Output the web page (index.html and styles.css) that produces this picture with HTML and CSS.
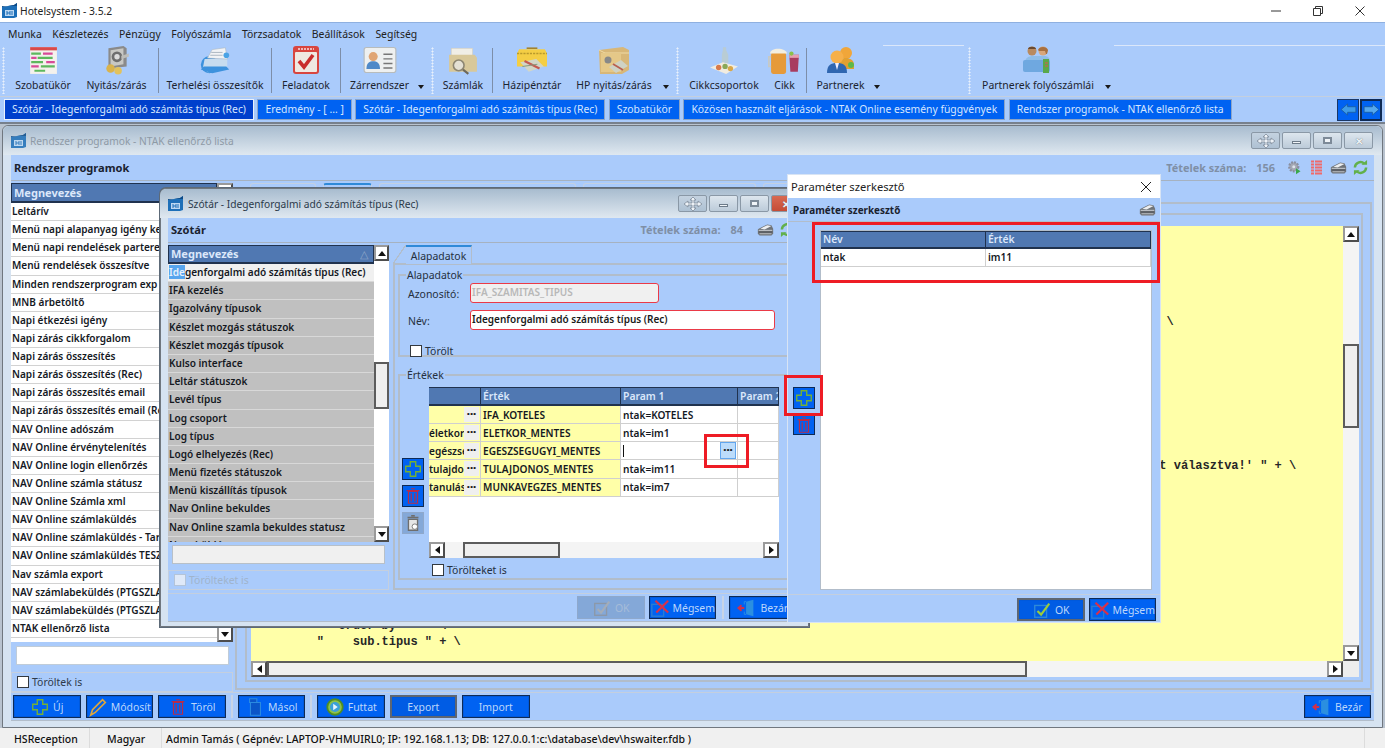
FILE: index.html
```html
<!DOCTYPE html>
<html lang="hu">
<head>
<meta charset="utf-8">
<title>Hotelsystem - 3.5.2</title>
<link rel="stylesheet" href="styles.css">
</head>
<body>
<svg class="sprite" xmlns="http://www.w3.org/2000/svg">
  <symbol id="logo" viewBox="0 0 16 16"><path d="M0 4l12-2 3-2v14l-3 1H0z" fill="#1d6fb8"/><path d="M0 4l12-2 3-2v3H0z" fill="#0c4a86"/><rect x="3" y="7" width="9" height="6" fill="#bcd8f2"/><path d="M5 8v4M8 8v4M5 10h3M10 8v4" stroke="#1d6fb8" stroke-width="1"/></symbol>
  <symbol id="plus" viewBox="0 0 22 22"><path d="M8 3h6v5h5v6h-5v5H8v-5H3V8h5z" fill="none" stroke="#74b036" stroke-width="1.500"/></symbol>
  <symbol id="trash" viewBox="0 0 22 22"><path d="M6 6h10v13H6zM4 5h14M9 3h4M9 8v9M13 8v9" fill="none" stroke="#b92c48" stroke-width="1.300"/></symbol>
  <symbol id="pencil" viewBox="0 0 22 22"><path d="M3 20l2-6L16 3l3 3L8 17z" fill="none" stroke="#e0a83a" stroke-width="1.800"/></symbol>
  <symbol id="copy" viewBox="0 0 22 22"><path d="M5 2h8v4h-8zM8 6h9v14H6V6z" fill="#0a55c8" stroke="#2a8ae0" stroke-width="1.200"/></symbol>
  <symbol id="play" viewBox="0 0 22 22"><circle cx="11" cy="11" r="8.500" fill="#8ec24a" stroke="#4f8d22" stroke-width="2"/><circle cx="11" cy="11" r="5.500" fill="#3aa0d8"/><path d="M9 7.500l5 3.500-5 3.500z" fill="#e6f4ff"/></symbol>
  <symbol id="check" viewBox="0 0 22 22"><rect x="3" y="6" width="13" height="13" fill="none" stroke="#2e8ad8" stroke-width="1.500"/><path d="M6 12l4 4 9-12" fill="none" stroke="#9ccc3a" stroke-width="2.400"/></symbol>
  <symbol id="checkgrey" viewBox="0 0 22 22"><rect x="3" y="6" width="13" height="13" fill="none" stroke="#8c98a8" stroke-width="1.500"/><path d="M6 12l4 4 9-12" fill="none" stroke="#a4adb9" stroke-width="2.400"/></symbol>
  <symbol id="cancel" viewBox="0 0 22 22"><rect x="2" y="7" width="13" height="13" fill="none" stroke="#2b7cd0" stroke-width="1.500"/><path d="M6 3l14 13M20 3L7 16" fill="none" stroke="#d8304a" stroke-width="2.400"/></symbol>
  <symbol id="door" viewBox="0 0 22 22"><path d="M10 4l8-2v18l-8-2z" fill="#2b8fe0"/><path d="M10 4h-2v3M10 18H8v-3" fill="none" stroke="#2b8fe0"/><path d="M1 11h7M5 8l-3.500 3 3.500 3" fill="none" stroke="#d0304a" stroke-width="2"/></symbol>
  <symbol id="printer" viewBox="0 0 20 14"><path d="M2 6l10-5 5 1 2 4v6l-2 2H3l-2-2V7z" fill="#6f7378"/><path d="M4 6l8-4 5 1-8 4z" fill="#eceef0"/><path d="M2 8h16" stroke="#d9dcdf"/><path d="M2 10h16" stroke="#4a4d52"/><path d="M3 12h14" stroke="#c6c9cc"/></symbol>
  <symbol id="gear" viewBox="0 0 20 20"><circle cx="9" cy="9" r="6" fill="#a4a8b4" stroke="#8a8fa0" stroke-width="3" stroke-dasharray="2.500 1.500"/><circle cx="9" cy="9" r="2" fill="#dfe4ec"/><path d="M12 11l6 4-6 4z" fill="#3aa84a"/></symbol>
  <symbol id="redlist" viewBox="0 0 17 15"><path d="M3 1.500h11M3 4.500h11M3 7.500h11M3 10.500h11M3 13.500h11" stroke="#ef6a6a" stroke-width="2" stroke-dasharray="3 1 8 0"/></symbol>
  <symbol id="refresh" viewBox="0 0 18 16"><path d="M3 8a6 6 0 0 1 10-4.200M15 8a6 6 0 0 1-10 4.200" fill="none" stroke="#62b04a" stroke-width="2.600"/><path d="M10 5h6V0zM8 11H2v5z" fill="#62b04a"/></symbol>
  <symbol id="move" viewBox="0 0 22 16"><path d="M11 1l3 3h-2v3h4V5l4 3-4 3V9h-4v3h2l-3 3-3-3h2V9H6v2L2 8l4-3v2h4V4H8z" fill="#edf2f7" stroke="#7f8c9a" stroke-width=".8"/></symbol>
  <symbol id="t-gantt" viewBox="0 0 28 28"><rect x="2" y="2" width="25" height="25" fill="#f4f1ec"/><rect x="2" y="2" width="25" height="3" fill="#d94a4a"/><path d="M3 8h9M9 12h14M3 16h11M12 20h13M6 24h10" stroke="#5db85d" stroke-width="2"/><path d="M14 8h9M3 12h5M17 16h8M3 20h7" stroke="#d84a98" stroke-width="2"/></symbol>
  <symbol id="t-safe" viewBox="0 0 28 28"><path d="M6 3l14-2 3 2v17l-17 2z" fill="#8a8a8a"/><path d="M8 5l12-2v15l-12 2z" fill="#c8c8c4"/><circle cx="14" cy="11" r="5" fill="#6e6e6e"/><circle cx="14" cy="11" r="2.500" fill="#dcdcdc"/><path d="M18 10l7-2v3l-7 2z" fill="#bdbdb9"/><circle cx="8" cy="22" r="4" fill="#d9b34c"/><circle cx="15" cy="24" r="3.500" fill="#e2c25c"/></symbol>
  <symbol id="t-printer" viewBox="0 0 36 30"><circle cx="12" cy="20" r="9" fill="#3d92dd"/><path d="M7 14h24v11l-20 3-6-4z" fill="#c7dcef"/><path d="M10 13l5-9 14-2 2 12z" fill="#f1f3f5" stroke="#a9b4bf" stroke-width=".6"/><path d="M14 7h12M13 10h13" stroke="#a9b4bf"/><path d="M3 25l12 4 18-4-3-3H6z" fill="#3d92dd"/><circle cx="30" cy="10" r="3" fill="#4aa3e5"/></symbol>
  <symbol id="t-cal" viewBox="0 0 28 30"><rect x="1" y="1" width="26" height="28" rx="3" fill="#d8463f"/><rect x="3" y="7" width="22" height="20" rx="1" fill="#efe9e2"/><path d="M7 16l5 6 9-12" fill="none" stroke="#c92d2d" stroke-width="3.600"/><path d="M6 4h16" stroke="#f7dede" stroke-width="1.500" stroke-dasharray="2 1"/></symbol>
  <symbol id="t-card" viewBox="0 0 30 26"><rect x="1" y="2" width="28" height="22" rx="2" fill="#eef0f0" stroke="#b8bcbc"/><circle cx="9" cy="10" r="4" fill="#e0a574"/><path d="M3 21c0-6 3-7 6-7s6 1 6 7z" fill="#4f89c8"/><path d="M18 8h8M18 12h8M18 16h8M18 20h8" stroke="#777" stroke-width="1.300"/></symbol>
  <symbol id="t-folder" viewBox="0 0 28 28"><rect x="3" y="3" width="20" height="10" fill="#f0eee6" stroke="#cfc9b8" stroke-width=".5"/><path d="M1 9h24l2 3v13H1z" fill="#d8c89a"/><circle cx="10" cy="19" r="5" fill="#e4e0d4" stroke="#8d8672" stroke-width="1.500"/><path d="M14 23l5 4" stroke="#6e685a" stroke-width="2"/></symbol>
  <symbol id="t-cash" viewBox="0 0 30 28"><path d="M3 4h24l2 4v12H1V8z" fill="#f4ce44"/><path d="M1 8h28" stroke="#b99a2c" stroke-width="1.400" stroke-dasharray="2 1"/><path d="M10 3h10" stroke="#a2822e" stroke-width="1.500"/><path d="M4 16l15-3 7 7-14 5z" fill="#d3d6c6"/><path d="M8 15l14 7" stroke="#c45a50" stroke-width="2"/><path d="M6 20l14-2" stroke="#8a9a80"/></symbol>
  <symbol id="t-box" viewBox="0 0 32 30"><path d="M1 5l24-3 6 3v20l-7 4H2z" fill="#d8b778"/><path d="M1 5l6 3h24" fill="none" stroke="#f0dba6"/><rect x="3" y="8" width="20" height="19" fill="#e5c888"/><circle cx="10" cy="15" r="3.500" fill="#888"/><path d="M11 22l12-7 7 6-12 7z" fill="#cfd2c4"/><path d="M15 19l10 6" stroke="#b85f50" stroke-width="1.800"/></symbol>
  <symbol id="t-food" viewBox="0 0 30 28"><path d="M14 2h3v3l2 4v8h-6V9l1-4z" fill="#b9ccd4"/><path d="M2 21l12-5 14 4-11 7z" fill="#f1ece0"/><circle cx="10" cy="21" r="2.500" fill="#d87a4a"/><circle cx="16" cy="20" r="2.500" fill="#8aa858"/><circle cx="21" cy="22" r="2.500" fill="#d9a84a"/></symbol>
  <symbol id="t-beer" viewBox="0 0 30 28"><rect x="2" y="7" width="14" height="20" rx="2" fill="#e69a3a"/><path d="M1 8c0-6 15-6 16 0z" fill="#f3eee0"/><path d="M2 11H0v9h2" fill="none" stroke="#c9c9c0" stroke-width="1.500"/><path d="M19 9h9l-1 16h-7z" fill="#a83c60"/><path d="M19 9h9v3h-9z" fill="#e6a0b0"/><circle cx="21" cy="8" r="2" fill="#8cc04a"/></symbol>
  <symbol id="t-people" viewBox="0 0 30 30"><circle cx="20" cy="8" r="6" fill="#f0a63a"/><path d="M12 20c0-5 4-7 8-7s8 2 8 7v4H12z" fill="#e2a030"/><circle cx="11" cy="12" r="6.500" fill="#f6b04a"/><path d="M1 28c0-8 4-10 10-10s10 2 10 10z" fill="#2f66b0"/><path d="M9 18h4l-2 7z" fill="#eef"/><circle cx="25" cy="20" r="3" fill="#5cb84a"/></symbol>
  <symbol id="t-acc" viewBox="0 0 32 30"><circle cx="10" cy="6" r="4.500" fill="#b98a5f"/><path d="M6 4c0-3 8-3 8 0z" fill="#6a4a30"/><circle cx="21" cy="6" r="4.500" fill="#d8a67a"/><path d="M16 5c1-4 9-4 10 0l-1 4h-1l-1-3h-6z" fill="#a87040"/><path d="M3 17c0-4 4-6 8-6l11 0c4 0 6 2 6 6z" fill="#8fbde8"/><rect x="1" y="15" width="27" height="12" rx="2" fill="#6fa8e0"/><rect x="21" y="14" width="6" height="14" fill="#5aa84a"/><path d="M23 18h3M23 21h3" stroke="#e25050"/></symbol>
</svg>

<div class="app">
  <header class="titlebar">
    <svg class="logo"><use href="#logo"/></svg>
    <span class="title-text">Hotelsystem - 3.5.2</span>
    <div class="winctl">
      <svg class="ctl" viewBox="0 0 12 12"><path d="M1 6h10" stroke="#333"/></svg>
      <svg class="ctl" viewBox="0 0 12 12"><path d="M1.500 3.500h7v7h-7zM3.500 3.500v-2h7v7h-2" fill="none" stroke="#333"/></svg>
      <svg class="ctl" viewBox="0 0 12 12"><path d="M1.500 1.500l9 9M10.500 1.500l-9 9" stroke="#333"/></svg>
    </div>
  </header>

  <nav class="menu">
    <span>Munka</span><span>Készletezés</span><span>Pénzügy</span><span>Folyószámla</span><span>Törzsadatok</span><span>Beállítások</span><span>Segítség</span>
  </nav>

  <div class="toolbar">
    <i class="grip g0"></i>
    <div class="tool w1"><svg class="ti"><use href="#t-gantt"/></svg><span>Szobatükör</span></div>
    <div class="tool w2"><svg class="ti"><use href="#t-safe"/></svg><span>Nyitás/zárás</span></div>
    <i class="sep"></i>
    <div class="tool w3"><svg class="ti"><use href="#t-printer"/></svg><span>Terhelési összesítők</span></div>
    <i class="sep"></i>
    <div class="tool w4"><svg class="ti"><use href="#t-cal"/></svg><span>Feladatok</span></div>
    <i class="sep"></i>
    <div class="tool w5"><svg class="ti"><use href="#t-card"/></svg><span>Zárrendszer</span></div>
    <i class="drop"></i>
    <i class="grip"></i>
    <div class="tool w6"><svg class="ti"><use href="#t-folder"/></svg><span>Számlák</span></div>
    <i class="sep"></i>
    <div class="tool w7"><svg class="ti"><use href="#t-cash"/></svg><span>Házipénztár</span></div>
    <div class="tool w8"><svg class="ti"><use href="#t-box"/></svg><span>HP nyitás/zárás</span></div>
    <i class="drop"></i>
    <i class="grip"></i>
    <div class="tool w9"><svg class="ti"><use href="#t-food"/></svg><span>Cikkcsoportok</span></div>
    <div class="tool w10"><svg class="ti"><use href="#t-beer"/></svg><span>Cikk</span></div>
    <i class="sep"></i>
    <div class="tool w11"><svg class="ti"><use href="#t-people"/></svg><span>Partnerek</span></div>
    <i class="drop"></i>
    <i class="band band-a"></i>
    <i class="grip"></i>
    <div class="tool w12"><svg class="ti"><use href="#t-acc"/></svg><span>Partnerek folyószámlái</span></div>
    <i class="drop"></i>
    <i class="band band-b"></i>
  </div>

  <div class="tabbar">
    <span class="wtab active">Szótár - Idegenforgalmi adó számítás típus (Rec)</span>
    <span class="wtab">Eredmény - [ ... ]</span>
    <span class="wtab">Szótár - Idegenforgalmi adó számítás típus (Rec)</span>
    <span class="wtab">Szobatükör</span>
    <span class="wtab">Közösen használt eljárások - NTAK Online esemény függvények</span>
    <span class="wtab">Rendszer programok - NTAK ellenőrző lista</span>
    <div class="navs">
      <button class="nav"><svg viewBox="0 0 18 14"><path d="M1 7l7-6v3h9v6H8v3z" fill="#3d9be8" stroke="#1a5fa8"/></svg></button>
      <button class="nav nav-on"><svg viewBox="0 0 18 14"><path d="M17 7l-7-6v3H1v6h9v3z" fill="#55a8ee" stroke="#1a5fa8"/></svg></button>
    </div>
  </div>

  <main class="desktop">
    <section class="win win-main">
      <div class="win-title">
        <svg class="logo dim"><use href="#logo"/></svg>
        <span class="wt-text faded">Rendszer programok - NTAK ellenőrző lista</span>
        <div class="wbtns">
          <span class="wbtn wbtn-move"><svg><use href="#move"/></svg></span>
          <span class="wbtn"><i class="g-min"></i></span>
          <span class="wbtn"><i class="g-max"></i></span>
          <span class="wbtn"><i class="g-x">✕</i></span>
        </div>
      </div>
      <div class="head">
        <strong class="head-name">Rendszer programok</strong>
        <div class="head-right">
          <span class="count">Tételek száma:</span><span class="count num">156</span>
          <svg class="hi"><use href="#gear"/></svg>
          <svg class="hi"><use href="#redlist"/></svg>
          <svg class="hi"><use href="#printer"/></svg>
          <svg class="hi"><use href="#refresh"/></svg>
        </div>
      </div>
      <div class="main-body">
        <div class="main-left">
          <div class="listwrap main-list">
            <div class="list">
              <div class="lhead">Megnevezés</div>
              <div class="lrow">Leltárív</div>
              <div class="lrow">Menü napi alapanyag igény ke</div>
              <div class="lrow">Menü napi rendelések partere</div>
              <div class="lrow">Menü rendelések összesítve</div>
              <div class="lrow">Minden rendszerprogram exp</div>
              <div class="lrow">MNB árbetöltő</div>
              <div class="lrow">Napi étkezési igény</div>
              <div class="lrow">Napi zárás cikkforgalom</div>
              <div class="lrow">Napi zárás összesítés</div>
              <div class="lrow">Napi zárás összesítés (Rec)</div>
              <div class="lrow">Napi zárás összesítés email</div>
              <div class="lrow">Napi zárás összesítés email (Re</div>
              <div class="lrow">NAV Online adószám</div>
              <div class="lrow">NAV Online érvénytelenítés</div>
              <div class="lrow">NAV Online login ellenőrzés</div>
              <div class="lrow">NAV Online számla státusz</div>
              <div class="lrow">NAV Online Számla xml</div>
              <div class="lrow">NAV Online számlaküldés</div>
              <div class="lrow">NAV Online számlaküldés - Tar</div>
              <div class="lrow">NAV Online számlaküldés TESZ</div>
              <div class="lrow">Nav számla export</div>
              <div class="lrow">NAV számlabeküldés (PTGSZLA</div>
              <div class="lrow">NAV számlabeküldés (PTGSZLA</div>
              <div class="lrow">NTAK ellenőrző lista</div>
            </div>
            <div class="vscroll">
              <span class="sb-btn"><i class="tri up"></i></span>
              <span class="sb-fill"></span>
              <span class="sb-btn"><i class="tri down"></i></span>
            </div>
          </div>
          <div class="filter"><span class="input"></span></div>
          <label class="chk-row"><i class="cb"></i><span>Töröltek is</span></label>
        </div>
        <div class="main-right">
          <div class="ghost-tabs">
            <i class="gt gt1"></i><i class="gt gt2"></i><i class="gt gt3"></i><i class="gt gt4"></i><i class="gt gt5"></i>
          </div>
          <div class="panel-outer">
            <div class="panel-inner">
              <div class="editor">
                <div class="code-row">
                  <div class="code">
                    <div class="ln l1">\</div>
                    <div class="ln l2">t választva!' " + \</div>
                    <div class="ln l3">"  order by  " + \</div>
                    <div class="ln l4">"    sub.tipus " + \</div>
                  </div>
                  <div class="vscroll editor-v">
                    <span class="sb-btn"><i class="tri up"></i></span>
                    <span class="sb-gap gap-a"></span>
                    <span class="sb-thumb thumb-v"></span>
                    <span class="sb-fill"></span>
                    <span class="sb-btn"><i class="tri down"></i></span>
                  </div>
                </div>
                <div class="hscroll editor-h">
                  <span class="sb-btn"><i class="tri left"></i></span>
                  <span class="sb-thumb thumb-h"></span>
                  <span class="sb-fill"></span>
                  <span class="sb-btn"><i class="tri right"></i></span>
                  <span class="corner"></span>
                </div>
              </div>
            </div>
          </div>
        </div>
      </div>
      <div class="actions">
        <button class="btn"><svg><use href="#plus"/></svg>Új</button>
        <button class="btn"><svg><use href="#pencil"/></svg>Módosít</button>
        <button class="btn"><svg><use href="#trash"/></svg>Töröl</button>
        <i class="bsep"></i>
        <button class="btn"><svg><use href="#copy"/></svg>Másol</button>
        <i class="bsep"></i>
        <button class="btn"><svg><use href="#play"/></svg>Futtat</button>
        <button class="btn btn-grey">Export</button>
        <button class="btn">Import</button>
        <button class="btn btn-end"><svg><use href="#door"/></svg>Bezár</button>
      </div>
    </section>

    <section class="win win-dict">
      <div class="win-title">
        <svg class="logo"><use href="#logo"/></svg>
        <span class="wt-text">Szótár - Idegenforgalmi adó számítás típus (Rec)</span>
        <div class="wbtns">
          <span class="wbtn wbtn-move"><svg><use href="#move"/></svg></span>
          <span class="wbtn"><i class="g-min"></i></span>
          <span class="wbtn"><i class="g-max"></i></span>
          <span class="wbtn wbtn-close"><i class="g-x">✕</i></span>
        </div>
      </div>
      <div class="head head-dict">
        <strong class="head-name">Szótár</strong>
        <div class="head-right">
          <span class="count">Tételek száma:</span><span class="count num">84</span>
          <svg class="hi"><use href="#printer"/></svg>
          <svg class="hi"><use href="#refresh"/></svg>
        </div>
      </div>
      <div class="dict-body">
        <div class="dict-left">
          <div class="listwrap dict-list">
            <div class="list grey">
              <div class="lhead">Megnevezés<em class="sort">△</em></div>
              <div class="lrow cur"><span class="hl">Ide</span>genforgalmi adó számítás típus (Rec)</div>
              <div class="lrow">IFA kezelés</div>
              <div class="lrow">Igazolvány típusok</div>
              <div class="lrow">Készlet mozgás státuszok</div>
              <div class="lrow">Készlet mozgás típusok</div>
              <div class="lrow">Kulso interface</div>
              <div class="lrow">Leltár státuszok</div>
              <div class="lrow">Levél típus</div>
              <div class="lrow">Log csoport</div>
              <div class="lrow">Log típus</div>
              <div class="lrow">Logó elhelyezés (Rec)</div>
              <div class="lrow">Menü fizetés státuszok</div>
              <div class="lrow">Menü kiszállítás típusok</div>
              <div class="lrow">Nav Online bekuldes</div>
              <div class="lrow">Nav Online szamla bekuldes statusz</div>
              <div class="lrow">Nem küldés</div>
            </div>
            <div class="vscroll">
              <span class="sb-btn"><i class="tri up"></i></span>
              <span class="sb-gap gap-b"></span>
              <span class="sb-thumb thumb-dict"></span>
              <span class="sb-fill"></span>
              <span class="sb-btn"><i class="tri down"></i></span>
            </div>
          </div>
          <div class="filter filter-dict"><span class="input off"></span></div>
          <label class="chk-row chk-off"><i class="cb"></i><span>Törölteket is</span></label>
        </div>
        <div class="dict-right">
          <div class="tabstrip"><span class="tab-on">Alapadatok</span></div>
          <div class="tabpanel">
            <fieldset class="group g-base">
              <legend>Alapadatok</legend>
              <div class="field"><label>Azonosító:</label><span class="req ro">IFA_SZAMITAS_TIPUS</span></div>
              <div class="field"><label>Név:</label><span class="req wide">Idegenforgalmi adó számítás típus (Rec)</span></div>
              <label class="chk-plain chk-del"><i class="cb"></i><span>Törölt</span></label>
            </fieldset>
            <fieldset class="group g-vals">
              <legend>Értékek</legend>
              <div class="vals-row">
                <div class="side">
                  <button class="sq"><svg><use href="#plus"/></svg></button>
                  <button class="sq"><svg><use href="#trash"/></svg></button>
                  <button class="sq sq-off"><svg viewBox="0 0 22 22"><path d="M6 7h10v12H6zM5 5h12M9 3h4" fill="#e6e6e6" stroke="#6e6e6e" stroke-width="1.500"/><circle cx="13" cy="15" r="3" fill="#fff" stroke="#777"/></svg></button>
                </div>
                <div class="gridbox">
                  <div class="grid-view">
                    <div class="grow ghead"><span class="c1"></span><span class="c2">Érték</span><span class="c3">Param 1</span><span class="c4">Param 2</span></div>
                    <div class="grow"><span class="c1 y"><b class="dots">···</b></span><span class="c2 y">IFA_KOTELES</span><span class="c3">ntak=KOTELES</span><span class="c4"></span></div>
                    <div class="grow"><span class="c1 y">életkor<b class="dots">···</b></span><span class="c2 y">ELETKOR_MENTES</span><span class="c3">ntak=im1</span><span class="c4"></span></div>
                    <div class="grow"><span class="c1 y">egészsé<b class="dots">···</b></span><span class="c2 y">EGESZSEGUGYI_MENTES</span><span class="c3 edit"><i class="caret"></i><b class="dots dots-on">···</b></span><span class="c4"></span></div>
                    <div class="grow"><span class="c1 y">tulajdo<b class="dots">···</b></span><span class="c2 y">TULAJDONOS_MENTES</span><span class="c3">ntak=im11</span><span class="c4"></span></div>
                    <div class="grow"><span class="c1 y">tanulás<b class="dots">···</b></span><span class="c2 y">MUNKAVEGZES_MENTES</span><span class="c3">ntak=im7</span><span class="c4"></span></div>
                  </div>
                  <div class="hscroll">
                    <span class="sb-btn"><i class="tri left"></i></span>
                    <span class="sb-gap gap-c"></span>
                    <span class="sb-thumb thumb-grid"></span>
                    <span class="sb-fill"></span>
                    <span class="sb-btn"><i class="tri right"></i></span>
                  </div>
                </div>
              </div>
              <label class="chk-plain chk-vals"><i class="cb"></i><span>Törölteket is</span></label>
            </fieldset>
          </div>
        </div>
      </div>
      <div class="actions dict-actions">
        <button class="btn btn-off"><svg><use href="#checkgrey"/></svg>OK</button>
        <button class="btn"><svg><use href="#cancel"/></svg>Mégsem</button>
        <i class="bsep"></i>
        <button class="btn"><svg><use href="#door"/></svg>Bezár</button>
      </div>
    </section>

    <section class="param">
      <div class="param-title"><span>Paraméter szerkesztő</span><svg class="ctl" viewBox="0 0 12 12"><path d="M1 1l10 10M11 1L1 11" stroke="#222"/></svg></div>
      <div class="param-head"><strong>Paraméter szerkesztő</strong><svg class="hi"><use href="#printer"/></svg></div>
      <div class="param-body">
        <div class="param-side">
          <button class="sq"><svg><use href="#plus"/></svg></button>
          <button class="sq sq-low"><svg><use href="#trash"/></svg></button>
        </div>
        <div class="param-grid">
          <div class="prow phead"><span class="p1">Név</span><span class="p2">Érték</span></div>
          <div class="prow"><span class="p1">ntak</span><span class="p2">im11</span></div>
        </div>
      </div>
      <div class="param-actions">
        <button class="btn btn-grey"><svg><use href="#check"/></svg>OK</button>
        <button class="btn"><svg><use href="#cancel"/></svg>Mégsem</button>
      </div>
    </section>

    <i class="mark mark-grid"></i>
    <i class="mark mark-add"></i>
    <i class="mark mark-dots"></i>
  </main>

  <footer class="status">
    <span class="st st1">HSReception</span>
    <span class="st st2">Magyar</span>
    <span class="st st3">Admin Tamás ( Gépnév: LAPTOP-VHMUIRL0; IP: 192.168.1.13; DB: 127.0.0.1:c:\database\dev\hswaiter.fdb )</span>
    <span class="st st4"></span>
  </footer>
</div>
</body>
</html>
```

FILE: styles.css
```css
* { box-sizing: border-box; }
html, body { margin: 0; padding: 0; height: 100%; overflow: hidden; }
body { font-family: "Noto Sans", "Liberation Sans", sans-serif; font-size: 10.450px; color: #1a1a1a; background: #fff; }
i, em { font-style: normal; }
button { font: inherit; padding: 0; margin: 0; cursor: default; }
fieldset { margin: 0; }
.sprite { position: absolute; width: 0; height: 0; }

.app { width: 1385px; height: 748px; display: flex; flex-direction: column; overflow: hidden; }

/* title bar */
.titlebar { height: 22px; flex: none; display: flex; align-items: center; padding-left: 2px; background: #fff; }
.logo { width: 16px; height: 16px; flex: none; }
.logo.dim { opacity: .85; }
.title-text { margin-left: 2px; font-size: 10.300px; color: #222; }
.winctl { margin-left: auto; display: flex; gap: 30px; padding-right: 19px; }
.ctl { width: 12px; height: 12px; display: block; }

/* menu */
.menu { height: 23px; flex: none; background: #aacbfb; border-top: 1px solid #8fb0e0; display: flex; align-items: center; padding: 0 0 0 8px; gap: 10.500px; color: #222; }

/* toolbar */
.toolbar { height: 52px; flex: none; background: #aacbfb; display: flex; align-items: stretch; border-bottom: 1px solid #c4cfde; }
.tool { display: flex; flex-direction: column; align-items: center; justify-content: flex-end; padding-bottom: 4px; flex: none; white-space: nowrap; color: #1c2430; }
.ti { width: 34px; height: 31px; margin-bottom: 3px; }
.w1 { width: 70px; } .w2 { width: 77px; } .w3 { width: 106px; } .w4 { width: 62px; } .w5 { width: 71px; }
.w6 { width: 52px; } .w7 { width: 72px; } .w8 { width: 92px; } .w9 { width: 84px; } .w10 { width: 37px; } .w11 { width: 61px; } .w12 { width: 128px; }
.sep { width: 7px; flex: none; margin: 3px 0 3px; background: linear-gradient(#7d8ea8, #7d8ea8) center / 1px 100% no-repeat; }
.grip { width: 10px; flex: none; margin: 2px 0; background: radial-gradient(circle, #e8f0fc 45%, transparent 50%) center top / 3px 3px repeat-y; }
.g0 { margin-left: -1px; width: 9px; }
.drop { width: 12px; flex: none; position: relative; }
.drop::after { content: ""; position: absolute; left: 3px; bottom: 7px; border: 3px solid transparent; border-top: 4px solid #1a1a1a; border-bottom: 0; }
.band { flex: none; height: 1px; background: #dbe7fa; }
.band-a { width: 81px; }
.band-b { flex: 1; }

/* window tabs */
.tabbar { height: 25px; flex: none; background: #aacbfb; display: flex; align-items: center; gap: 3.500px; padding-left: 4px; }
.wtab { height: 21px; line-height: 19px; padding: 0 7px; background: #0062f2; color: #d6e6ff; border: 1px solid #8ba4c8; white-space: nowrap; flex: none; font-size: 10.350px; }
.wtab.active { background: #0040cc; border-color: #eaf1fb; }
.navs { margin-left: auto; display: flex; gap: 1px; padding-right: 3px; }
.nav { width: 22px; height: 22px; background: #0062f2; border: 1px solid #1a3766; display: flex; align-items: center; justify-content: center; }
.nav-on { border: 2px solid #0e2a55; }
.nav svg { width: 17px; height: 13px; }

/* desktop */
.desktop { flex: 1; position: relative; background: #b9c3cf; border-top: 2px solid #77808c; overflow: hidden; }

/* MDI windows */
.win { position: absolute; display: flex; flex-direction: column; border: 1px solid #70777f; border-radius: 6px 6px 0 0; background: #d6e3f1; padding: 0 8px; }
.win-main { left: 2px; top: 1px; width: 1381px; height: 603px; padding-bottom: 6px; }
.win-dict { left: 160px; top: 64px; width: 649px; height: 439px; padding: 0 7px 4px; box-shadow: 0 0 0 1px #5d6a78; }
.win-title { height: 29px; flex: none; display: flex; align-items: center; background: linear-gradient(#a8bccf, #dfe8f0); margin: 0 -8px; padding: 0 8px; border-radius: 6px 6px 0 0; }
.wt-text { margin-left: 4px; font-size: 10.200px; color: #2b3a4a; }
.wt-text.faded { color: #8e9aa6; margin-left: 3px; }
.wbtns { margin-left: auto; display: flex; gap: 2px; padding-right: 1px; }
.wbtn { width: 29px; height: 17px; border: 1px solid #8a98a6; border-radius: 2px; background: linear-gradient(#dde6ee, #bccbd9); display: flex; align-items: center; justify-content: center; }
.wbtn-move { background: linear-gradient(#c4d2e0, #aec1d3); }
.wbtn-move svg { width: 22px; height: 16px; }
.wbtn-close { background: linear-gradient(#d96a52, #c54c36); }
.g-min { width: 9px; height: 3px; background: #f0f4f8; border: 1px solid #6c7a88; margin-top: 4px; }
.g-max { width: 9px; height: 7px; background: #f0f4f8; border: 2px solid #7d8a98; }
.g-x { font-size: 10px; line-height: 1; color: #eef2f6; font-weight: 700; text-shadow: 0 0 1px #55606c; }

.head { height: 26px; flex: none; background: #aacbfb; display: flex; align-items: center; padding: 0 5px 0 2px; border-bottom: 1px solid #a6b2c0; }
.head-name { font-size: 11.100px; color: #1a2230; margin-left: 1px; }
.head-right { margin-left: auto; display: flex; align-items: center; gap: 5px; }
.count { font-weight: 700; font-size: 10.900px; color: #7f8fa6; }
.num { margin-left: 5px; margin-right: 6px; }
.hi { width: 17px; height: 15px; flex: none; }
.head-dict { height: 25px; padding-bottom: 2px; }
.head-dict .num { margin-right: 9px; }

/* body of main */
.main-body { flex: 1; min-height: 0; display: flex; background: #aacbfb; padding-top: 2px; gap: 2px; }
.main-left { width: 222px; flex: none; display: flex; flex-direction: column; }
.main-list { height: 459px; }
.listwrap { display: flex; flex: none; background: #fff; overflow: hidden; }
.list { flex: 1; min-width: 0; overflow: hidden; font-weight: 600; font-size: 10.050px; background: #fff; }
.lhead { height: 20px; line-height: 17px; background: #5078b2; border: 2px solid #20324e; border-width: 1px 1px 2px 1px; color: #dbe7fa; padding-left: 2px; font-weight: 700; font-size: 11px; display: flex; justify-content: space-between; padding-right: 5px; }
.sort { color: #8ea6c8; font-weight: 400; }
.lrow { height: 18.130px; line-height: 16.500px; padding-left: 1px; white-space: nowrap; overflow: hidden; border-bottom: 1.500px solid #d2d2d2; color: #15191f; }
.grey .lhead { height: 19px; line-height: 16px; }
.grey .lrow { height: 18.200px; background: #c0c0c0; border-bottom-color: #d8d8d8; }
.grey .lrow.cur { background: #f0f0f0; }
.hl { background: #57a5ee; color: #e7f1fc; }

.vscroll { width: 16px; flex: none; display: flex; flex-direction: column; background: #f4f4f4; }
.hscroll { height: 16px; flex: none; display: flex; background: #f4f4f4; }
.sb-btn { width: 16px; height: 16px; flex: none; background: #fff; border: 2px solid #4d4d4d; border-top-color: #9a9a9a; border-left-color: #9a9a9a; display: flex; align-items: center; justify-content: center; }
.sb-fill { flex: 1; }
.sb-thumb { flex: none; background: #efefef; border: 2px solid #5c5c5c; }
.tri { width: 0; height: 0; border: 4px solid transparent; }
.tri.up { border-bottom: 5px solid #111; border-top: 0; }
.tri.down { border-top: 5px solid #111; border-bottom: 0; }
.tri.left { border-right: 5px solid #111; border-left: 0; }
.tri.right { border-left: 5px solid #111; border-right: 0; }

.filter { height: 26px; flex: none; display: flex; align-items: center; justify-content: center; background: #aacbfb; }
.input { width: 213px; height: 19px; background: #fff; border: 1px solid #c0ccd8; }
.input.off { background: #f0f0f0; border-color: #b8c0c8; }
.chk-row { height: 20px; flex: none; display: flex; align-items: center; gap: 3px; padding-left: 5px; margin-top: 4px; border: 1px solid #c4cfde; background: #aacbfb; color: #2e3a4a; }
.cb { width: 12px; height: 12px; flex: none; background: #fff; border: 1px solid #33393f; display: block; }
.chk-off { color: #a0b4cc; margin-top: 3px; }
.chk-off .cb { border-color: #b4c4d8; background: #dfe9f8; }

.main-right { flex: 1; min-width: 0; display: flex; flex-direction: column; }
.ghost-tabs { height: 19px; flex: none; display: flex; }
.gt { height: 9px; border: 1px solid #c3d0e2; border-bottom: 0; border-radius: 3px 3px 0 0; flex: none; margin-right: 7px; }
.gt1 { width: 66px; margin-left: 15px; } .gt2 { width: 49px; border-top: 2px solid #2f8ad8; } .gt3 { width: 197px; } .gt4 { width: 173px; } .gt5 { width: 26px; }
.panel-outer { flex: 1; min-height: 0; border: 2px solid #b2bdca; padding: 9px 7px 6px 8px; margin: 0 2px 2px 0; }
.panel-inner { height: 100%; border: 2px solid #b2bdca; padding: 11px 2px 3px 4px; }
.editor { height: 100%; display: flex; flex-direction: column; }
.code-row { flex: 1; min-height: 0; display: flex; }
.code { flex: 1; min-width: 0; padding: 8px 0 0 1px; background: #ffffa8; overflow: hidden; font-family: "Liberation Mono", monospace; font-size: 12px; line-height: 16px; color: #262626; font-weight: 700; }
.ln { height: 16px; white-space: pre; }
.l1 { margin: 80px 0 0 127ch; }
.l2 { margin: 128px 0 0 126ch; }
.l3 { margin: 144px 0 0 9ch; }
.l4 { margin-left: 9ch; }
.editor-v { width: 16px; }
.gap-a { height: 102px; flex: none; }
.thumb-v { height: 84px; }
.thumb-h { width: 760px; }
.corner { width: 16px; flex: none; background: #ededed; }

/* action bars */
.actions { height: 29px; flex: none; display: flex; align-items: center; gap: 5px; background: #aacbfb; padding: 0 0 0 2px; border-top: 1px solid #c4cfde; border-bottom: 1px solid #b2bdca; }
.btn { width: 67.500px; height: 23px; flex: none; background: #0062f2; border: 1px solid #0e2a55; box-shadow: inset 0 0 0 1px #0059dc; color: #bcd6fb; display: flex; align-items: center; justify-content: center; gap: 3px; white-space: nowrap; }
.btn svg { width: 20px; height: 20px; flex: none; }
.btn-grey { border: 2px solid #5e6672; background: #005ce4; }
.btn-off { background: #84a8d8; border-color: #8ea8cc; color: #a6bcd8; box-shadow: none; }
.btn-end { margin-left: auto; margin-right: 3px; }
.bsep { width: 2px; height: 23px; background: #c8d4e6; flex: none; }

/* dictionary dialog */
.dict-body { flex: 1; min-height: 0; display: flex; background: #aacbfb; padding: 2px 0 3px; gap: 4px; }
.dict-left { width: 221px; flex: none; display: flex; flex-direction: column; }
.dict-list { height: 297px; }
.filter-dict { height: 25px; justify-content: flex-start; padding-left: 4px; }
.dict-list .vscroll { width: 15px; background: #fff; }
.dict-list .sb-btn { width: 15px; }
.gap-b { height: 101px; flex: none; }
.thumb-dict { height: 47px; }
.dict-right { flex: 1; min-width: 0; display: flex; flex-direction: column; }
.tabstrip { height: 18px; flex: none; padding-left: 13px; display: flex; }
.tab-on { width: 66px; position: relative; text-align: center; height: 19px; line-height: 18px; color: #25303e; border: 1px solid #b2bdca; border-top: 2px solid #2f8ad8; border-bottom: 0; border-left: 0; z-index: 1; background: #aacbfb; }
.tab-on::before { content: ""; position: absolute; left: -13px; top: -2px; bottom: 0; width: 13px; background: linear-gradient(to top left, transparent 47%, #b2bdca 48%, #b2bdca 53%, transparent 54%); }
.tabpanel { flex: 1; min-height: 0; border: 2px solid #b2bdca; padding: 4px 3px 8px 3px; display: flex; flex-direction: column; gap: 12px; }
.group { border: 2px solid #b2bdca; padding: 0 0 0 6px; min-width: 0; position: relative; }
.group legend { color: #25303e; padding: 0 1px; line-height: 12px; }
.g-base { height: 88px; flex: none; }
.g-vals { flex: 1; min-height: 0; }
.field { display: flex; align-items: center; height: 20px; margin-bottom: 7px; margin-top: 2px; color: #25303e; }
.field label { width: 64px; padding: 2px 0 0 2px; }
.req { display: block; height: 20px; line-height: 17px; padding-left: 1px; border: 1.500px solid #ea3a48; border-radius: 3px; width: 189px; background: #f0f0f0; color: #b8b8b8; font-weight: 600; font-size: 10px; white-space: nowrap; overflow: hidden; }
.req.wide { width: 305px; background: #fff; color: #1a1a1a; }
.chk-plain { display: flex; align-items: center; gap: 3px; color: #25303e; padding-left: 4px; margin-top: 7px; }
.chk-del { margin-top: 14px; }
.vals-row { display: flex; gap: 5px; height: 171px; margin-left: -4px; margin-top: 6px; }
.side { width: 22px; flex: none; padding-top: 71px; display: flex; flex-direction: column; gap: 5px; }
.sq { width: 22px; height: 22px; background: #0062f2; border: 1px solid #0e2a55; display: flex; align-items: center; justify-content: center; flex: none; }
.sq svg { width: 20px; height: 20px; }
.sq-off { background: #84a8d8; border-color: #8ea8cc; }
.sq-low { height: 20px; margin-top: 6px; }
.gridbox { width: 350px; flex: none; display: flex; flex-direction: column; background: #fff; }
.grid-view { flex: 1; min-height: 0; overflow: hidden; }
.grow { display: flex; height: 18.130px; font-weight: 600; font-size: 10.100px; color: #15191f; }
.grow > span { display: flex; align-items: center; flex: none; overflow: hidden; white-space: nowrap; border-bottom: 1.500px solid #cfcfcf; border-right: 1.500px solid #cfcfcf; padding-left: 2px; position: relative; }
.c1 { width: 52px; } .c2 { width: 140px; } .c3 { width: 117px; } .c4 { width: 41px; }
.y { background: #ffffa8; }
.grow .c1 { padding-left: 0; padding-right: 16px; }
.dots { position: absolute; right: 1px; top: 1px; width: 15px; height: 15px; background: #efefef; text-align: center; line-height: 13px; font-weight: 900; font-size: 11px; color: #1a1a1a; }
.dots-on { right: 1px; width: 16px; height: 17px; background: #bcdcfb; border: 1px solid #62a6ee; top: 0; }
.caret { width: 1px; height: 12px; background: #111; display: block; }
.grow.ghead { height: 19px; font-size: 10.400px; }
.grow.ghead > span { background: #5078b2; color: #dbe7fa; border-top: 1px solid #20324e; border-bottom: 2px solid #20324e; border-right: 1px solid #20324e; }
.gap-c { width: 18px; flex: none; }
.thumb-grid { width: 97px; }
.chk-vals { margin-top: 5px; padding-left: 26px; }
.dict-actions { padding-left: 409px; gap: 4px; }
.dict-actions .bsep { margin: 0 1.500px; }

/* parameter dialog */
.param { position: absolute; left: 787px; top: 50px; width: 374px; height: 449px; background: #aacbfb; border: 1px solid #d8e4f4; display: flex; flex-direction: column; }
.param-title { height: 23px; flex: none; background: #fff; display: flex; align-items: center; justify-content: space-between; padding: 0 8px 0 3px; font-size: 11.200px; color: #222; }
.param-head { height: 24px; flex: none; display: flex; align-items: center; justify-content: space-between; padding: 0 4px 0 5px; border-bottom: 1px solid #b2bdca; font-size: 9.900px; color: #1a2230; }
.param-body { flex: 1; min-height: 0; display: flex; padding: 8px 8px 4px 5px; }
.param-side { width: 27px; flex: none; padding-top: 157px; }
.param-grid { flex: 1; background: #fff; border: 1px solid #b2bdca; }
.prow { display: flex; height: 18.130px; font-weight: 600; font-size: 10.100px; color: #15191f; }
.prow > span { display: block; line-height: 17px; padding-left: 2px; border-bottom: 1.500px solid #cfcfcf; border-right: 1.500px solid #cfcfcf; flex: none; }
.p1 { width: 165px; } .p2 { width: 165px; }
.prow.phead { font-size: 10.400px; }
.prow.phead > span { line-height: 15px; background: #5078b2; color: #dbe7fa; border-top: 1px solid #20324e; border-bottom: 2px solid #20324e; border-right: 1px solid #20324e; }
.param-actions { height: 28px; flex: none; border-top: 1px solid #c4cfde; display: flex; justify-content: flex-end; align-items: flex-start; gap: 4px; padding: 3px 4px 0 0; }

/* red review marks */
.mark { position: absolute; border: 3px solid #ee1c25; pointer-events: none; }
.mark-grid { left: 812px; top: 98px; width: 348px; height: 61px; }
.mark-add { left: 784px; top: 251px; width: 39px; height: 41px; }
.mark-dots { left: 704px; top: 310px; width: 45px; height: 34px; }

/* status bar */
.status { height: 20px; flex: none; background: #f0f0f0; display: flex; align-items: center; color: #111; font-weight: 500; }
.st { display: block; padding-left: 14px; white-space: nowrap; border-right: 1px solid #dcdcdc; height: 100%; line-height: 22px; font-size: 10.500px; }
.st1 { width: 90px; }
.st2 { width: 72px; padding-left: 17px; }
.st3 { width: 1203px; padding-left: 4px; }
.st4 { flex: 1; border: 0; }
```
